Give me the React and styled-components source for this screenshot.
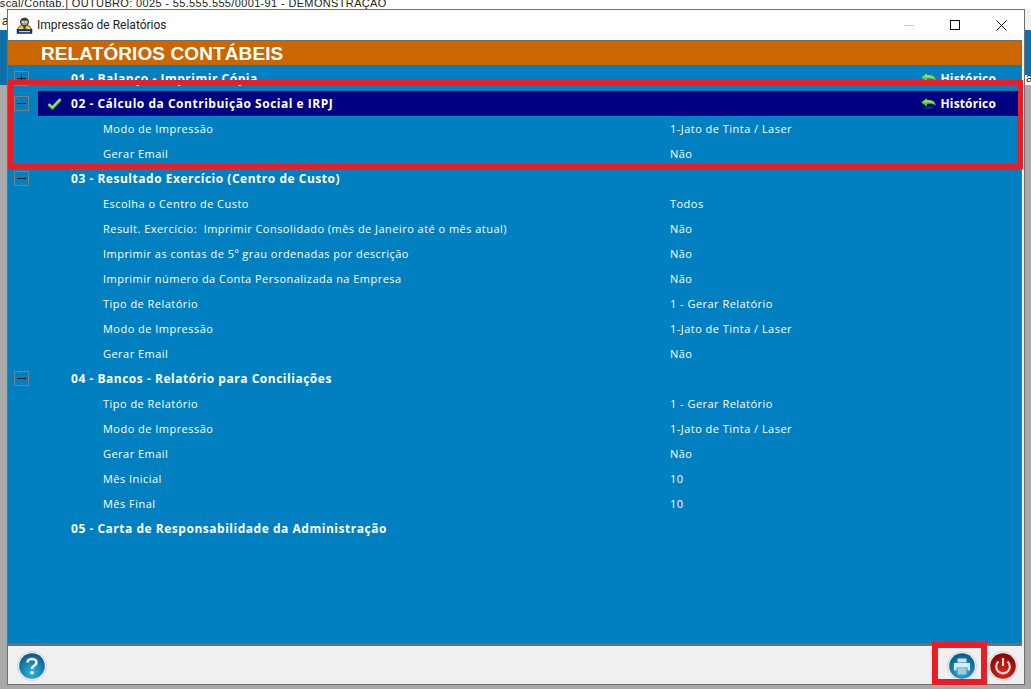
import React from 'react'
import styled, { createGlobalStyle } from 'styled-components'

const GlobalStyle = createGlobalStyle`
  html, body {
    margin: 0;
    padding: 0;
    background: #a9a9a9;
  }
`

const Desktop = styled.div`
  position: relative;
  width: 1031px;
  height: 689px;
  overflow: hidden;
  background: #a9a9a9;
  font-family: "Liberation Sans", Arial, sans-serif;
`
const TopBar = styled.div`
  height: 9px;
  background: #fff;
  color: #222;
  font-size: 11px;
  line-height: 6px;
  white-space: nowrap;
  overflow: hidden;
  letter-spacing: 0.35px;
  text-indent: -10px;
`
const BackBand = styled.div`
  display: flex;
  justify-content: space-between;
  color: #222;
  font-size: 12px;
`
const BackSide = styled.div`
  width: 7px;
  height: ${props => props.h}px;
  padding: ${props => props.pad};
  box-sizing: border-box;
  overflow: hidden;
  background: ${props => props.bg};
`
const Window = styled.div`
  position: absolute;
  left: 7px;
  top: 9px;
  width: 1016px;
  height: 674px;
  border: 1px solid #6f6f6f;
  background: #f0f0f0;
  display: flex;
  flex-direction: column;
`
const TitleBar = styled.div`
  height: 30px;
  background: #fff;
  display: flex;
  align-items: center;
  padding-left: 8px;
  flex-shrink: 0;
`
const TitleText = styled.span`
  margin-left: 4px;
  font-family: Roboto, sans-serif;
  font-size: 12px;
  color: #222;
`
const WinButtons = styled.div`
  margin-left: auto;
  display: flex;
  height: 100%;
`
const WinButton = styled.div`
  width: 46px;
  height: 30px;
  display: flex;
  align-items: center;
  justify-content: center;
`
const Content = styled.div`
  flex: 1;
  margin-right: 2px;
  display: flex;
  flex-direction: column;
  border-top: 1px solid #6f6f6f;
  border-bottom: 3px solid #6f6f6f;
  border-right: 1px solid #6f6f6f;
  background: #0080c0;
  min-height: 0;
`
const Heading = styled.div`
  height: 24px;
  background: #cc6600;
  color: #fff;
  font-weight: 700;
  font-size: 19px;
  letter-spacing: 0.1px;
  line-height: 25px;
  padding-left: 33px;
  flex-shrink: 0;
`
const Tree = styled.div`
  padding-top: 1px;
  flex: 1;
`
const GroupRow = styled.div`
  position: relative;
  height: 25px;
  display: flex;
  align-items: center;
  padding-left: 30px;
  color: #fff;
  font-family: "Open Sans", sans-serif;
  font-size: 12px;
  font-weight: 700;
`
const Toggle = styled.div`
  position: absolute;
  left: 6px;
  top: 5px;
  width: 13px;
  height: 13px;
  border: 1px solid #7a7f85;
  display: flex;
  align-items: center;
  justify-content: center;
`
const RowBody = styled.div`
  flex: 1;
  height: 25px;
  display: flex;
  align-items: center;
  padding-right: 25px;
  background: ${props => props.selected ? '#000080' : 'transparent'};
`
const CheckSlot = styled.div`
  width: 33px;
  display: flex;
  justify-content: center;
`
const GroupLabel = styled.span`
  letter-spacing: 0.52px;
`
const History = styled.div`
  margin-left: auto;
  display: flex;
  align-items: center;
  gap: 4px;
  letter-spacing: 0.15px;
`
const OptionRow = styled.div`
  height: 25px;
  display: grid;
  grid-template-columns: 567px 1fr;
  align-items: center;
  padding-left: 95px;
  color: #fff;
  font-family: "Open Sans", sans-serif;
  font-size: 11px;
  letter-spacing: 0.47px;
  white-space: pre;
`
const Footer = styled.div`
  height: 38px;
  flex-shrink: 0;
  display: flex;
  align-items: center;
  justify-content: space-between;
  padding: 2px 6px 0 9px;
  box-sizing: border-box;
`
const FooterRight = styled.div`
  display: flex;
  gap: 11px;
`
const Highlight = styled.div`
  position: absolute;
  border: ${props => props.b}px solid #ed1c24;
  box-sizing: border-box;
  left: ${props => props.x}px;
  top: ${props => props.y}px;
  width: ${props => props.w}px;
  height: ${props => props.h}px;
`

const Check = () => (
  <svg width="15" height="12" viewBox="0 0 15 12">
    <path d="M1.5 6.5 L5.5 10 L13.5 1.5" fill="none" stroke="#2f8a2a" strokeWidth="3.4" />
    <path d="M1.5 6 L5.5 9.5 L13.5 1" fill="none" stroke="#86ea68" strokeWidth="2.2" />
  </svg>
)

const BackArrow = () => (
  <svg width="15" height="14" viewBox="0 0 15 14">
    <path d="M2 10 C5 13 10 12.5 14 9 C10 10 6 10.5 2 10 Z" fill="#16406a" />
    <path d="M0 5.5 L6 1 L6 3 C10 2.5 14 3.5 15 8.5 C12 6.5 9 6.5 6 7 L6 9.5 Z" fill="#58c23a" />
    <path d="M1.5 5.5 L6 2 L6 3.6 C9.5 3 12.5 4 14 6.5 C11 5 8 5 1.5 5.5 Z" fill="#9ae67a" />
  </svg>
)

const Plus = () => (
  <svg width="11" height="11" viewBox="0 0 11 11">
    <path d="M1 5.5 H10 M5.5 1 V10" stroke="#111" strokeWidth="1" />
  </svg>
)

const Minus = () => (
  <svg width="11" height="11" viewBox="0 0 11 11">
    <path d="M1 5.5 H10" stroke="#111" strokeWidth="1" />
  </svg>
)

const AppIcon = () => (
  <svg width="17" height="17" viewBox="0 0 17 17">
    <circle cx="8.5" cy="5" r="4" fill="#a89a7c" stroke="#2a2a2a" />
    <path d="M5 3.5 C6 1 11 1 12 3.5 Z" fill="#333" />
    <rect x="6" y="4.5" width="2" height="1.3" fill="#eee" />
    <rect x="9" y="4.5" width="2" height="1.3" fill="#eee" />
    <path d="M1 13 L3 9.5 L6 8.5 H11 L14 9.5 L16 13 Z" fill="#e8d24a" stroke="#222" strokeWidth="0.7" />
    <path d="M7 9 H10 L9.3 13 H7.7 Z" fill="#444" />
    <rect x="1" y="12.5" width="15" height="4" fill="#1c2a7a" stroke="#222" strokeWidth="0.5" />
    <rect x="3" y="14" width="11" height="1.2" fill="#e8d24a" />
  </svg>
)

const RoundIcon = ({ id, from, to, children }) => (
  <svg width="30" height="30" viewBox="0 0 30 30">
    <defs>
      <radialGradient id={id} cx="50%" cy="75%" r="70%">
        <stop offset="0" stopColor={from} />
        <stop offset="1" stopColor={to} />
      </radialGradient>
    </defs>
    <circle cx="15" cy="15" r="14.5" fill="#f2f2f2" stroke="#d2d2d2" />
    <circle cx="15" cy="15" r="12.8" fill={`url(#${id})`} />
    {children}
  </svg>
)

const HelpIcon = () => (
  <RoundIcon id="help" from="#2fb6e0" to="#0a5a90">
    <path d="M10.5 11.5 C10.5 6.8 19.5 6.8 19.5 11.5 C19.5 14.5 15 14.5 15 18" fill="none" stroke="#f2f8fb" strokeWidth="2.6" />
    <circle cx="15" cy="21.8" r="1.8" fill="#f2f8fb" />
  </RoundIcon>
)

const PrintIcon = () => (
  <RoundIcon id="print" from="#2fb0dc" to="#0a5a90">
    <rect x="10.5" y="7.5" width="9" height="4" fill="#cfe4ee" />
    <path d="M7 12 H23 V19.5 H20.5 V16.5 H9.5 V19.5 H7 Z" fill="#d8ebf3" />
    <rect x="10.5" y="17" width="9" height="6.5" fill="#9ccbe0" />
  </RoundIcon>
)

const PowerIcon = () => (
  <RoundIcon id="power" from="#e0261f" to="#8a0404">
    <path d="M10.5 10.5 A6.8 6.8 0 1 0 19.5 10.5" fill="none" stroke="#f6ddd8" strokeWidth="2.2" />
    <path d="M15 7 V15" stroke="#f6ddd8" strokeWidth="2.2" />
  </RoundIcon>
)

const groups = [
  { label: '01 - Balanço - Imprimir Cópia', open: false, history: true, options: [] },
  {
    label: '02 - Cálculo da Contribuição Social e IRPJ',
    open: true,
    selected: true,
    history: true,
    options: [
      ['Modo de Impressão', '1-Jato de Tinta / Laser'],
      ['Gerar Email', 'Não'],
    ],
  },
  {
    label: '03 - Resultado Exercício (Centro de Custo)',
    open: true,
    options: [
      ['Escolha o Centro de Custo', 'Todos'],
      ['Result. Exercício:  Imprimir Consolidado (mês de Janeiro até o mês atual)', 'Não'],
      ['Imprimir as contas de 5º grau ordenadas por descrição', 'Não'],
      ['Imprimir número da Conta Personalizada na Empresa', 'Não'],
      ['Tipo de Relatório', '1 - Gerar Relatório'],
      ['Modo de Impressão', '1-Jato de Tinta / Laser'],
      ['Gerar Email', 'Não'],
    ],
  },
  {
    label: '04 - Bancos - Relatório para Conciliações',
    open: true,
    options: [
      ['Tipo de Relatório', '1 - Gerar Relatório'],
      ['Modo de Impressão', '1-Jato de Tinta / Laser'],
      ['Gerar Email', 'Não'],
      ['Mês Inicial', '10'],
      ['Mês Final', '10'],
    ],
  },
  { label: '05 - Carta de Responsabilidade da Administração', noToggle: true, options: [] },
]

export default function App() {
  return (
    <Desktop>
      <GlobalStyle />
      <TopBar>Fiscal/Contab.| OUTUBRO: 0025 - 55.555.555/0001-91 - DEMONSTRAÇÃO</TopBar>
      <BackBand>
        <BackSide
          h={76}
          pad="5px 0 0 2px"
          bg="linear-gradient(#fff 0, #fff 21px, #0f6fa8 21px, #0f6fa8 76px)"
        >
          a
        </BackSide>
        <BackSide
          h={76}
          pad="62px 0 0 2px"
          bg="linear-gradient(#f0f0f0 0, #f0f0f0 21px, #0f6fa8 21px, #0f6fa8 66px, #fff 66px, #fff 76px)"
        >
          a
        </BackSide>
      </BackBand>
      <Window>
        <TitleBar>
          <AppIcon />
          <TitleText>Impressão de Relatórios</TitleText>
          <WinButtons>
            <WinButton>
              <svg width="10" height="10" viewBox="0 0 10 10"><path d="M0 5.5 H10" stroke="#c8c8c8" /></svg>
            </WinButton>
            <WinButton>
              <svg width="10" height="10" viewBox="0 0 10 10"><rect x="0.5" y="0.5" width="9" height="9" fill="none" stroke="#111" /></svg>
            </WinButton>
            <WinButton>
              <svg width="11" height="11" viewBox="0 0 11 11"><path d="M0.5 0.5 L10.5 10.5 M10.5 0.5 L0.5 10.5" stroke="#111" /></svg>
            </WinButton>
          </WinButtons>
        </TitleBar>
        <Content>
          <Heading>RELATÓRIOS CONTÁBEIS</Heading>
          <Tree>
            {groups.map(group => (
              <React.Fragment key={group.label}>
                <GroupRow>
                  {!group.noToggle && <Toggle>{group.open ? <Minus /> : <Plus />}</Toggle>}
                  <RowBody selected={group.selected}>
                    <CheckSlot>{group.selected && <Check />}</CheckSlot>
                    <GroupLabel>{group.label}</GroupLabel>
                    {group.history && (
                      <History>
                        <BackArrow />
                        <span>Histórico</span>
                      </History>
                    )}
                  </RowBody>
                </GroupRow>
                {group.options.map(([name, value]) => (
                  <OptionRow key={name}>
                    <span>{name}</span>
                    <span>{value}</span>
                  </OptionRow>
                ))}
              </React.Fragment>
            ))}
          </Tree>
        </Content>
        <Footer>
          <HelpIcon />
          <FooterRight>
            <PrintIcon />
            <PowerIcon />
          </FooterRight>
        </Footer>
      </Window>
      <Highlight x={8} y={80} w={1015} h={89} b={5} />
      <Highlight x={932} y={642} w={55} h={43} b={6} />
    </Desktop>
  )
}
